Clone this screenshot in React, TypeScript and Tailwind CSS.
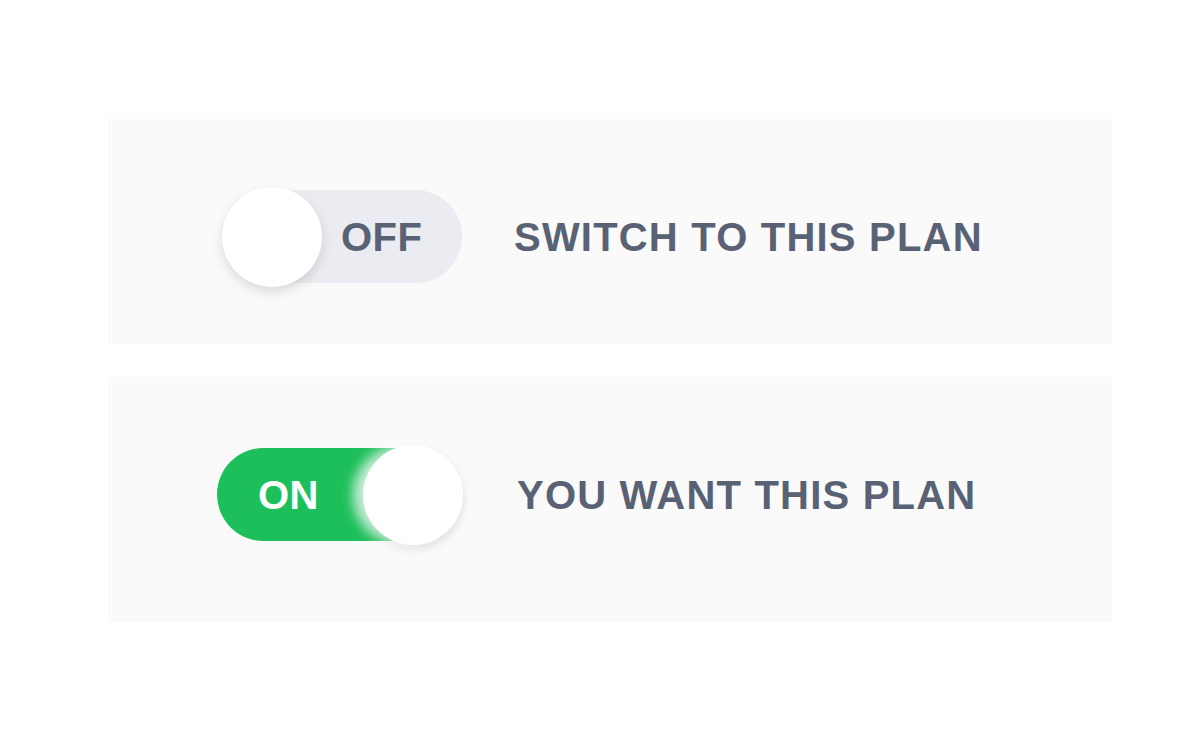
import React from 'react';

function Toggle({ on }: { on: boolean }) {
  return (
    <div className="relative w-[248px] h-[100px] shrink-0">
      <div
        className={`absolute top-[3px] h-[93px] w-[240px] rounded-full flex items-center ${
          on ? 'left-0 bg-[#1dbf5a] pl-[41px]' : 'left-[5px] bg-[#ebecf1] pl-[119px]'
        }`}
      >
        <span
          className={`text-[40px] font-bold leading-none tracking-[0.5px] ${
            on ? 'text-white' : 'text-[#596174]'
          }`}
        >
          {on ? 'ON' : 'OFF'}
        </span>
      </div>
      <div
        className={`absolute top-0 w-[100px] h-[100px] rounded-full bg-white ${
          on
            ? 'left-[146px] shadow-[-10px_0_12px_rgba(255,255,255,0.75),0_4px_10px_rgba(0,0,0,0.12)]'
            : 'left-[5px] shadow-[0_5px_12px_rgba(0,0,0,0.13)]'
        }`}
      />
    </div>
  );
}

function PlanRow({ on, label, className }: { on: boolean; label: string; className: string }) {
  return (
    <div className={`bg-[#fafafa] pl-[109px] pt-[68px] flex items-start ${className}`}>
      <div className={`flex items-center ${on ? 'gap-[52px]' : 'gap-[49px]'}`}>
        <Toggle on={on} />
        <span className="text-[40px] font-bold leading-none tracking-[1.2px] text-[#596174] whitespace-nowrap">
          {label}
        </span>
      </div>
    </div>
  );
}

export default function App() {
  return (
    <div
      className="w-[1200px] h-[752px] bg-white pt-[119px] pl-[108px]"
      style={{ fontFamily: '"Liberation Sans", Arial, sans-serif' }}
    >
      <div className="w-[1004px] flex flex-col gap-[33px]">
        <PlanRow on={false} label="SWITCH TO THIS PLAN" className="h-[225px]" />
        <PlanRow on={true} label="YOU WANT THIS PLAN" className="h-[245px]" />
      </div>
    </div>
  );
}
